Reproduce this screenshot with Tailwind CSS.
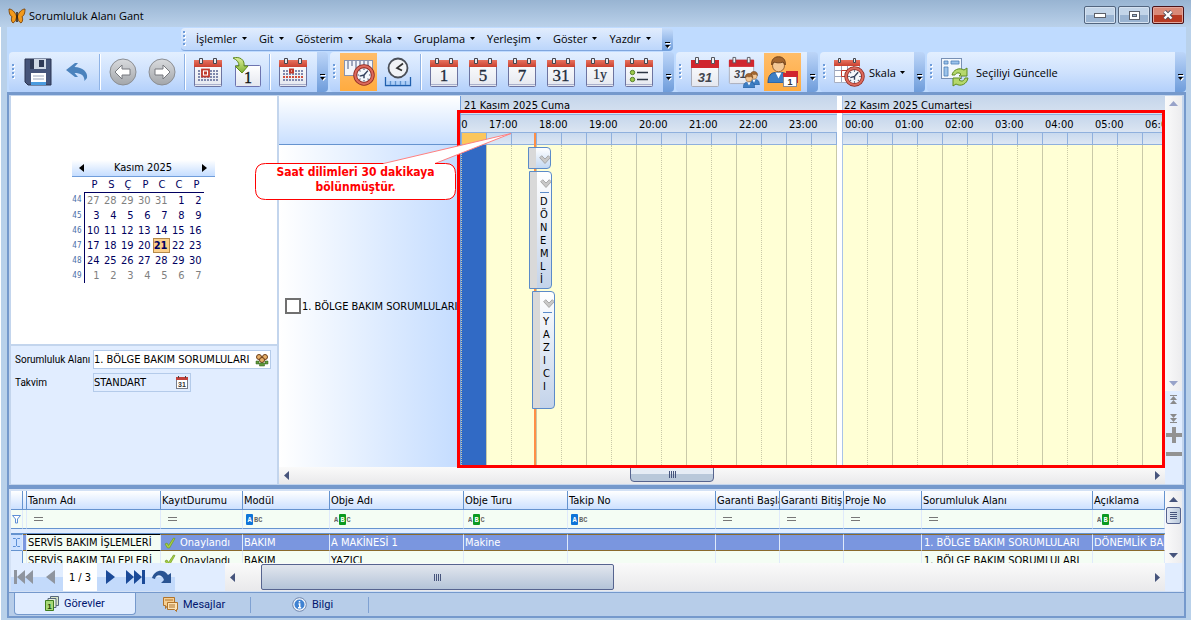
<!DOCTYPE html>
<html lang="tr">
<head>
  <meta charset="UTF-8" />
  <meta name="viewport" content="width=device-width, initial-scale=1.0"/>
  <title>Sorumluluk Alanı Gant</title>
  <script src="https://cdn.jsdelivr.net/npm/@tailwindcss/browser@4"></script>
</head>
<body class="h-screen overflow-hidden flex flex-col bg-[#b9d1ea] font-['DejaVu_Sans_Condensed','DejaVu_Sans',sans-serif] text-[11px] leading-[15px] text-black">

  <!-- Shared icon parts -->
  <svg class="absolute" width="0" height="0">
    <defs>
      <linearGradient id="red" x1="0" y1="0" x2="0" y2="1"><stop offset="0" stop-color="#e8735f"/><stop offset="1" stop-color="#c9402f"/></linearGradient>
      <linearGradient id="paper" x1="0" y1="0" x2="0" y2="1"><stop offset="0" stop-color="#ffffff"/><stop offset="1" stop-color="#e4e7ef"/></linearGradient>
      <linearGradient id="disc" x1="0" y1="0" x2="0" y2="1"><stop offset="0" stop-color="#d9dbde"/><stop offset="1" stop-color="#a3a6aa"/></linearGradient>
      <linearGradient id="green" x1="0" y1="0" x2="0" y2="1"><stop offset="0" stop-color="#dff09a"/><stop offset="1" stop-color="#7db031"/></linearGradient>
    </defs>
    <symbol id="cal" viewBox="0 0 30 32">
      <rect x="1.500" y="4.500" width="27" height="26" rx="1" fill="url(#paper)" stroke="#6d74a0"/>
      <path d="M2 28.500h26" stroke="#aab0cc"/>
      <path d="M1 4h28v7H1z" fill="url(#red)"/>
      <path d="M6.500 2.500h3v5h-3zM20.500 2.500h3v5h-3z" fill="#e9e9ee" stroke="#44474f"/>
    </symbol>
    <symbol id="cal31" viewBox="0 0 30 32">
      <rect x="1.500" y="4.500" width="27" height="26" rx="1" fill="url(#paper)" stroke="#a9acb8"/>
      <path d="M1 4h28v8H1z" fill="#d0262d"/>
      <path d="M5.500 1.500h3v6h-3zM21.500 1.500h3v6h-3z" fill="#f1f1f4" stroke="#55575f"/>
    </symbol>
    <symbol id="clock" viewBox="0 0 20 20">
      <circle cx="10" cy="10" r="8" fill="#f4f7fb" stroke="#8e2a22" stroke-width="3.500"/>
      <circle cx="10" cy="10" r="8" fill="none" stroke="#dc6a5c" stroke-width="2"/>
      <path d="M10 4v1.500M10 14.500V16M4 10h1.500M14.500 10H16M5.800 5.800l1 1M14.200 14.200l-1-1M5.800 14.200l1-1" stroke="#4d5a73"/>
      <path d="M6 11l4-1 3.500-4M10 10v3" stroke="#33405c" stroke-width="1.300" fill="none"/>
    </symbol>
    <symbol id="down" viewBox="0 0 5 3"><path d="M0 0h5L2.500 3z" fill="#000"/></symbol>
    <symbol id="more" viewBox="0 0 7 8"><path d="M2 2h5v1H2zM2 5h5L4.500 8z" fill="#fff"/><path d="M1 1h5v1H1zM1 4h5L3.500 7z" fill="#000"/></symbol>
    <symbol id="grip" viewBox="0 0 4 16"><path d="M1 1h2v2H1zM1 5h2v2H1zM1 9h2v2H1zM1 13h2v2H1z" fill="#fff"/><path d="M0 0h2v2H0zM0 4h2v2H0zM0 8h2v2H0zM0 12h2v2H0z" fill="#6f9ddb"/></symbol>
    <symbol id="tri" viewBox="0 0 5 9"><path d="M0 0l5 4.500L0 9z" fill="#46547c"/></symbol>
    <symbol id="eq" viewBox="0 0 9 5"><path d="M0 .5h9M0 3.500h9" stroke="#777"/></symbol>
    <symbol id="chev" viewBox="0 0 12 10"><path d="M.7 2.700l2-2L6 4l3.300-3.300 2 2L6 8.500z" fill="#c8c8c8" stroke="#9a9a9a" stroke-width=".8"/></symbol>
    <symbol id="check" viewBox="0 0 12 12"><path d="M1 7l2-1 1.500 2.500L9.500 1l1.500.5L5.500 11h-2z" fill="#a8cf45" stroke="#6f9b22" stroke-width=".7"/></symbol>
    <symbol id="man" viewBox="0 0 14 18">
      <path d="M0 18c0-5 2-7 5-7h4c3 0 5 2 5 7z" fill="#3f7fc4" stroke="#1f4f8c" stroke-width=".6"/>
      <path d="M5 11l2 4 2-4z" fill="#fff"/>
      <circle cx="7" cy="6.500" r="4" fill="#f3c795" stroke="#8c5a2c" stroke-width=".6"/>
      <path d="M2.500 6C2 2 4.500.5 7 .5S12 2 11.500 6L10 4C8 5 5 4.500 4 4z" fill="#a4662e" stroke="#6b3d17" stroke-width=".6"/>
    </symbol>
  </svg>

  <!-- Title bar -->
  <header class="h-[27px] shrink-0 flex items-center pl-2 pr-[7px] bg-gradient-to-b from-[#98b4d2] to-[#bad1ea]">
    <svg class="w-[18px] h-[18px] mt-1" viewBox="0 0 18 18">
      <path d="M8.500 9C7 5 4 2 1 2c0 4 1 7 3 7.500-1 2-1 5 1 6.500 2-1 3-3 3.500-6zM9.500 9C11 5 14 2 17 2c0 4-1 7-3 7.500 1 2 1 5-1 6.500-2-1-3-3-3.500-6z" fill="#f29a1c" stroke="#7a4309" stroke-width=".9"/>
      <path d="M9 5v10" stroke="#2b1a08" stroke-width="1.500"/>
    </svg>
    <h1 class="ml-[3px] mt-1 flex-1 font-['Open_Sans','Noto_Sans',sans-serif] text-[11px] leading-[16px]">Sorumluluk Alanı Gant</h1>
    <div class="flex gap-[2px] mt-[3px]">
      <button aria-label="Simge durumuna küçült" class="w-8 h-[18px] rounded-xs border border-[#52657f] shadow-[inset_0_0_0_1px_#d5e2f1] bg-gradient-to-b from-[#c3d5e9] from-50% to-[#9ab4d2] to-50% flex items-center justify-center">
        <svg width="12" height="6"><rect x=".5" y="1.500" width="11" height="4" fill="#fff" stroke="#5b5f68"/></svg>
      </button>
      <button aria-label="Ekranı kapla" class="w-8 h-[18px] rounded-xs border border-[#52657f] shadow-[inset_0_0_0_1px_#d5e2f1] bg-gradient-to-b from-[#c3d5e9] from-50% to-[#9ab4d2] to-50% flex items-center justify-center">
        <svg width="11" height="9"><rect x=".5" y=".5" width="10" height="8" fill="#fff" stroke="#5b5f68"/><rect x="3.500" y="3.500" width="4" height="2" fill="#9ab4d2" stroke="#5b5f68"/></svg>
      </button>
      <button aria-label="Kapat" class="w-8 h-[18px] rounded-xs border border-[#4a1218] shadow-[inset_0_0_0_1px_#e3a69c] bg-gradient-to-b from-[#d98977] from-50% to-[#b83a22] to-50% flex items-center justify-center">
        <svg width="12" height="10" viewBox="0 0 12 10"><path d="M2.500 1.500l7 7M9.500 1.500l-7 7" stroke="#4b4f5c" stroke-width="4"/><path d="M2.500 1.500l7 7M9.500 1.500l-7 7" stroke="#fff" stroke-width="2.400"/></svg>
      </button>
    </div>
  </header>

  <div class="flex-1 min-h-0 flex flex-col border-l border-white pl-[6px] pr-[5px] pb-[2px]">

    <!-- Menu -->
    <nav class="h-[25px] shrink-0 flex items-start pt-px pl-[174px] bg-[#bfdbff] font-['Open_Sans','Noto_Sans',sans-serif] text-[11px]">
      <div class="h-[23px] w-[481px] pb-px flex items-center bg-gradient-to-b from-[#e2edfd] to-[#bcd6fb] border-b border-[#7fa6de] rounded-l-sm">
        <svg class="w-1 h-4 ml-[2px] mr-[3px]"><use href="#grip"/></svg>
        <button class="px-[6px] flex items-center gap-[5px]">İşlemler<svg class="w-[5px] h-[3px]"><use href="#down"/></svg></button>
        <button class="px-[6px] flex items-center gap-[5px]">Git<svg class="w-[5px] h-[3px]"><use href="#down"/></svg></button>
        <button class="px-[6px] flex items-center gap-[5px]">Gösterim<svg class="w-[5px] h-[3px]"><use href="#down"/></svg></button>
        <button class="px-[6px] flex items-center gap-[5px]">Skala<svg class="w-[5px] h-[3px]"><use href="#down"/></svg></button>
        <button class="px-[6px] flex items-center gap-[5px]">Gruplama<svg class="w-[5px] h-[3px]"><use href="#down"/></svg></button>
        <button class="px-[6px] flex items-center gap-[5px]">Yerleşim<svg class="w-[5px] h-[3px]"><use href="#down"/></svg></button>
        <button class="px-[6px] flex items-center gap-[5px]">Göster<svg class="w-[5px] h-[3px]"><use href="#down"/></svg></button>
        <button class="px-[6px] flex items-center gap-[5px]">Yazdır<svg class="w-[5px] h-[3px]"><use href="#down"/></svg></button>
      </div>
      <button aria-label="Diğer" class="h-[23px] w-[11px] rounded-r-sm bg-gradient-to-b from-[#c6dcfa] to-[#6f9ddb] flex items-end justify-center pb-[2px]"><svg class="w-[7px] h-2"><use href="#more"/></svg></button>
    </nav>

    <!-- Toolbars -->
    <div class="h-10 shrink-0 flex gap-[2px] pl-[2px] bg-[#bfdbff] font-['Open_Sans','Noto_Sans',sans-serif] text-[11px]">
      <div class="flex">
        <div class="flex items-center pr-[5px] rounded-l-sm bg-gradient-to-b from-[#e3efff] via-[#cfe2fd] to-[#b3d0fb]">
          <svg class="w-1 h-4 ml-[3px] mr-[2px]"><use href="#grip"/></svg>
          <button aria-label="Kaydet" class="w-[39px] h-[38px] flex items-center justify-center">
            <svg width="28" height="28" viewBox="0 0 28 28">
              <path d="M1 1h26v26H4l-3-3z" fill="#46557a" stroke="#2a3450"/>
              <path d="M6 1h16v10H6z" fill="#cfd8e6"/><path d="M15 2h5v7h-5z" fill="#2f3a57"/><path d="M6 1h4v10H6z" fill="#2f3a57"/>
              <path d="M7 15h15v12H7z" fill="#fff"/><path d="M7 24h15v3H7z" fill="#4b9ce0"/><path d="M9 18h11M9 21h11" stroke="#9aa6bd"/>
            </svg>
          </button>
          <button aria-label="Geri al" class="w-[39px] h-[38px] flex items-center justify-center">
            <svg width="24" height="20" viewBox="0 0 24 20"><path d="M1 8L10 1h3L9.500 5c8 0 13.500 5 12.500 11l-2.500 3c0-6-4-8-10-8l3.500 4h-3z" fill="#4a82bd"/></svg>
          </button>
          <span class="w-[7px] h-9 flex justify-center"><i class="w-[2px] bg-[#8fb3e6] border-r border-white"></i></span>
          <button aria-label="Önceki" class="w-[39px] h-[38px] flex items-center justify-center">
            <svg width="28" height="28" viewBox="0 0 28 28"><circle cx="14" cy="14" r="13" fill="url(#disc)" stroke="#8b8e93"/><path d="M6 14l7-7v4h8v6h-8v4z" fill="#fff" stroke="#77797e"/></svg>
          </button>
          <button aria-label="Sonraki" class="w-[39px] h-[38px] flex items-center justify-center">
            <svg width="28" height="28" viewBox="0 0 28 28"><circle cx="14" cy="14" r="13" fill="url(#disc)" stroke="#8b8e93"/><path d="M22 14l-7-7v4H7v6h8v4z" fill="#fff" stroke="#77797e"/></svg>
          </button>
          <span class="w-[7px] h-9 flex justify-center"><i class="w-[2px] bg-[#8fb3e6] border-r border-white"></i></span>
          <button aria-label="Bugün" class="w-[39px] h-[38px] flex items-center justify-center">
            <svg width="30" height="32" viewBox="0 0 30 32"><use href="#cal"/><path d="M5 15h20M5 18h20M5 21h20M5 24h20" stroke="#8089ad" stroke-width="2" stroke-dasharray="2 1"/><rect x="9" y="13.500" width="7" height="7" fill="#fff" stroke="#c0392b" stroke-width="1.800"/><path d="M11 15.500h3v3h-3z" fill="#c0392b"/></svg>
          </button>
          <button aria-label="Tarihe git" class="w-[39px] h-[38px] flex items-center justify-center">
            <svg width="30" height="32" viewBox="0 0 30 32"><rect x="3.500" y="9.500" width="25" height="21" rx="1" fill="url(#paper)" stroke="#6d74b0"/><text x="16" y="27" text-anchor="middle" font-family="Liberation Serif, serif" font-size="16" fill="#111" stroke="#111" stroke-width=".3">1</text><path d="M1 2c7-2 12 2 11 8h4l-6 7-7-7h4c0-4-2-6-6-8z" fill="url(#green)" stroke="#5f8a1c"/></svg>
          </button>
          <span class="w-[7px] h-9 flex justify-center"><i class="w-[2px] bg-[#8fb3e6] border-r border-white"></i></span>
          <button aria-label="Takvim" class="w-[39px] h-[38px] flex items-center justify-center">
            <svg width="30" height="32" viewBox="0 0 30 32"><use href="#cal"/><path d="M5 15h20M5 24h20" stroke="#8089ad" stroke-width="2" stroke-dasharray="2 1"/><path d="M5 18h20" stroke="#8089ad" stroke-width="2" stroke-dasharray="2 1"/><path d="M5 21h20" stroke="#d0503f" stroke-width="2" stroke-dasharray="2 1"/><path d="M11 12.500h5v5h-5z" fill="#c0392b"/><path d="M13 14.500h1v1h-1z" fill="#fff"/></svg>
          </button>
        </div>
        <button aria-label="Diğer" class="w-[11px] rounded-r-sm bg-gradient-to-b from-[#bcd5f8] to-[#6f9ddb] flex items-end justify-center pb-[11px]"><svg class="w-[7px] h-2"><use href="#more"/></svg></button>
      </div>

      <div class="flex">
        <div class="flex items-center pr-[5px] rounded-l-sm bg-gradient-to-b from-[#e3efff] via-[#cfe2fd] to-[#b3d0fb]">
          <svg class="w-1 h-4 ml-[3px] mr-[2px]"><use href="#grip"/></svg>
          <button aria-label="Zaman cetveli" class="w-[37px] mx-px h-[38px] flex items-center justify-center bg-gradient-to-b from-[#ffbd69] to-[#ffab3f]">
            <svg width="32" height="32" viewBox="0 0 32 32"><rect x="1.500" y="4.500" width="28" height="15" fill="#f3f5fa" stroke="#8a93ad"/><path d="M5 5v8M9 5v5M13 5v8M17 5v5M21 5v8M25 5v5" stroke="#4d5a80"/><use href="#clock" x="10" y="8" width="22" height="22"/></svg>
          </button>
          <button aria-label="Saat" class="w-[39px] h-[38px] flex items-center justify-center">
            <svg width="28" height="32" viewBox="0 0 28 32"><circle cx="14" cy="12" r="9.500" fill="#f1f3f6" stroke="#4a4f58" stroke-width="1.800"/><path d="M19 7.500l-6 4.500 5 2.500" fill="none" stroke="#333" stroke-width="1.700"/><path d="M1.500 21v8.500h25V21M6.500 25v4M11.500 25v4M16.500 25v4M21.500 25v4" fill="none" stroke="#1f5fae" stroke-width="1.300"/><path d="M2 25h24v4H2z" fill="#9ec6f2" opacity=".5"/></svg>
          </button>
          <span class="w-[7px] h-9 flex justify-center"><i class="w-[2px] bg-[#8fb3e6] border-r border-white"></i></span>
          <button aria-label="1 gün" class="w-[39px] h-[38px] flex items-center justify-center"><svg width="30" height="32" viewBox="0 0 30 32"><use href="#cal"/><text x="15" y="25" text-anchor="middle" font-family="Liberation Serif, serif" font-size="17" fill="#222c3c" stroke="#222c3c" stroke-width=".3">1</text></svg></button>
          <button aria-label="5 gün" class="w-[39px] h-[38px] flex items-center justify-center"><svg width="30" height="32" viewBox="0 0 30 32"><use href="#cal"/><text x="15" y="25" text-anchor="middle" font-family="Liberation Serif, serif" font-size="17" fill="#222c3c" stroke="#222c3c" stroke-width=".3">5</text></svg></button>
          <button aria-label="7 gün" class="w-[39px] h-[38px] flex items-center justify-center"><svg width="30" height="32" viewBox="0 0 30 32"><use href="#cal"/><text x="15" y="25" text-anchor="middle" font-family="Liberation Serif, serif" font-size="17" fill="#222c3c" stroke="#222c3c" stroke-width=".3">7</text></svg></button>
          <button aria-label="31 gün" class="w-[39px] h-[38px] flex items-center justify-center"><svg width="30" height="32" viewBox="0 0 30 32"><use href="#cal"/><text x="15" y="25" text-anchor="middle" font-family="Liberation Serif, serif" font-size="17" fill="#222c3c" stroke="#222c3c" stroke-width=".3">31</text></svg></button>
          <button aria-label="1 yıl" class="w-[39px] h-[38px] flex items-center justify-center"><svg width="30" height="32" viewBox="0 0 30 32"><use href="#cal"/><text x="15" y="23" text-anchor="middle" font-family="Liberation Serif, serif" font-size="14" fill="#222c3c" stroke="#222c3c" stroke-width=".2">1y</text></svg></button>
          <button aria-label="Liste" class="w-[39px] h-[38px] flex items-center justify-center"><svg width="30" height="32" viewBox="0 0 30 32"><use href="#cal"/><path d="M13 16.500h11M13 23.500h11" stroke="#2b3442" stroke-width="1.300"/><circle cx="8.500" cy="16.500" r="2.200" fill="#9cc94a" stroke="#55802a"/><circle cx="8.500" cy="23.500" r="2.200" fill="#9cc94a" stroke="#55802a"/></svg></button>
        </div>
        <button aria-label="Diğer" class="w-[11px] rounded-r-sm bg-gradient-to-b from-[#bcd5f8] to-[#6f9ddb] flex items-end justify-center pb-[11px]"><svg class="w-[7px] h-2"><use href="#more"/></svg></button>
      </div>

      <div class="flex">
        <div class="flex items-center pr-[5px] rounded-l-sm bg-gradient-to-b from-[#e3efff] via-[#cfe2fd] to-[#b3d0fb]">
          <svg class="w-1 h-4 ml-[3px] mr-[2px]"><use href="#grip"/></svg>
          <button aria-label="Ay" class="w-[39px] h-[38px] flex items-center justify-center"><svg width="30" height="32" viewBox="0 0 30 32"><use href="#cal31"/><text x="15" y="26" text-anchor="middle" font-family="Liberation Sans, sans-serif" font-weight="bold" font-style="italic" font-size="13" fill="#43464e">31</text></svg></button>
          <button aria-label="Ekip takvimi" class="w-[39px] h-[38px] flex items-center justify-center"><svg width="32" height="34" viewBox="0 0 32 34"><use href="#cal31" x="0" y="1" width="27" height="29"/><text x="12" y="23" text-anchor="middle" font-family="Liberation Sans, sans-serif" font-weight="bold" font-style="italic" font-size="11" fill="#43464e">31</text><use href="#man" x="20" y="16" width="12" height="14"/><use href="#man" x="15" y="18" width="12" height="15"/></svg></button>
          <button aria-label="Kişi takvimi" class="w-[37px] mx-px h-[38px] flex items-center justify-center bg-gradient-to-b from-[#ffbd69] to-[#ffab3f]"><svg width="32" height="34" viewBox="0 0 32 34"><use href="#man" x="0" y="1" width="23" height="27"/><path d="M19 16h12v12H19z" fill="#d0262d"/><rect x="16.500" y="18.500" width="13" height="13" fill="#fff" stroke="#888c98"/><path d="M16 18h14v4H16z" fill="#d0262d"/><text x="23" y="30" text-anchor="middle" font-family="Liberation Sans, sans-serif" font-weight="bold" font-size="9" fill="#333">1</text></svg></button>
        </div>
        <button aria-label="Diğer" class="w-[11px] rounded-r-sm bg-gradient-to-b from-[#bcd5f8] to-[#6f9ddb] flex items-end justify-center pb-[11px]"><svg class="w-[7px] h-2"><use href="#more"/></svg></button>
      </div>

      <div class="flex">
        <div class="w-[94px] flex items-center rounded-l-sm bg-gradient-to-b from-[#e3efff] via-[#cfe2fd] to-[#b3d0fb]">
          <svg class="w-1 h-4 ml-[3px] mr-[2px]"><use href="#grip"/></svg>
          <button class="flex items-center gap-1 pl-1 h-[38px]">
            <svg width="32" height="32" viewBox="0 0 32 32"><path d="M1.500 5.500h25v21h-25z" fill="#fff" stroke="#a9b0c2"/><path d="M2 14.500h24M2 20.500h24M8.500 10v16M14.500 10v16M20.500 10v16" stroke="#9aa3bb"/><path d="M1 4h26v6H1z" fill="url(#red)"/><path d="M5.500 2.500h2v4h-2zM20.500 2.500h2v4h-2z" fill="#eee" stroke="#44474f"/><path d="M8.500 14.500h6v6h-6z" fill="none" stroke="#c0392b"/><use href="#clock" x="11" y="10" width="21" height="21"/></svg>
            Skala<svg class="w-[5px] h-[3px]"><use href="#down"/></svg>
          </button>
        </div>
        <button aria-label="Diğer" class="w-[11px] rounded-r-sm bg-gradient-to-b from-[#bcd5f8] to-[#6f9ddb] flex items-end justify-center pb-[11px]"><svg class="w-[7px] h-2"><use href="#more"/></svg></button>
      </div>

      <div class="flex flex-1">
        <div class="flex-1 flex items-center rounded-l-sm bg-gradient-to-b from-[#e3efff] via-[#cfe2fd] to-[#b3d0fb]">
          <svg class="w-1 h-4 ml-[3px] mr-[2px]"><use href="#grip"/></svg>
          <button class="flex items-center gap-[6px] pl-1 h-[38px]">
            <svg width="30" height="30" viewBox="0 0 30 30"><rect x="1.500" y="1.500" width="20" height="20" fill="#f2f7fc" stroke="#7890b4"/><path d="M4 4h4v3H4zM11 4h8v3h-8zM4 10h4v9H4z" fill="#9cc3ea" stroke="#4d7fb8" stroke-width=".8"/>
              <path d="M12 18c1-5 7-8 12-5l3-2v8h-8l2-2c-3-2-5-1-6 1z" fill="#b5d86c" stroke="#5e8b22"/><path d="M28 21c-1 6-7 9-12 6l-3 2v-8h8l-2 2c3 2 5 1 6-2z" fill="#b5d86c" stroke="#5e8b22"/></svg>
            Seçiliyi Güncelle
          </button>
        </div>
        <button aria-label="Diğer" class="w-[11px] rounded-r-sm bg-gradient-to-b from-[#bcd5f8] to-[#6f9ddb] flex items-end justify-center pb-[11px]"><svg class="w-[7px] h-2"><use href="#more"/></svg></button>
      </div>
    </div>

    <main class="flex-1 min-h-0 flex flex-col border-2 border-t-[3px] border-[#7599cc] bg-[#7599cc]">
      <div class="flex-1 min-h-0 flex gap-[2px] px-[2px] py-px bg-[#c3d5ed]">

        <!-- Month and filter panel -->
        <aside class="w-[266px] shrink-0 flex flex-col gap-[2px]">
          <section class="h-[248px] pt-[2px] pr-[2px] bg-white flex flex-col items-center justify-center">
            <div class="w-[143px] h-[17px] flex items-center justify-between px-[7px] bg-gradient-to-b from-white to-[#c5ddff] border-b border-[#6f9ddb]">
              <button aria-label="Önceki ay"><svg width="5" height="8"><path d="M5 0v8L0 4z"/></svg></button>
              <span>Kasım 2025</span>
              <button aria-label="Sonraki ay"><svg width="5" height="8"><path d="M0 0v8l5-4z"/></svg></button>
            </div>
            <table class="w-[132px] mr-[11px] table-fixed border-separate border-spacing-0 text-[#000060] text-right [&_td]:p-0 [&_td]:pr-[2px] [&_td]:h-[15px]">
              <thead>
                <tr id="weekdays" class="h-[15px]"><th class="w-[13px]"></th></tr>
              </thead>
              <tbody id="month"></tbody>
            </table>
          </section>
          <section class="flex-1 bg-[#e1edff] pt-1 pl-[3px] flex flex-col gap-1">
            <div class="flex items-center">
              <label for="area" class="w-[79px] pl-px whitespace-nowrap font-['Roboto','Noto_Sans',sans-serif] text-[10px]">Sorumluluk Alanı</label>
              <div class="w-[178px] h-[19px] flex items-center bg-white border border-[#b4cbea]">
                <input id="area" value="1. BÖLGE BAKIM SORUMLULARI" class="flex-1 min-w-0 outline-none bg-transparent">
                <button aria-label="Sorumluluk alanı seç" class="px-px"><svg width="14" height="14" viewBox="0 0 14 14"><circle cx="4" cy="4" r="2.500" fill="#e7b06a" stroke="#6b3d17"/><circle cx="10" cy="4" r="2.500" fill="#e7b06a" stroke="#6b3d17"/><circle cx="7" cy="7" r="2.500" fill="#e7b06a" stroke="#6b3d17"/><path d="M1 8h3v3H1zM10 8h3v3h-3zM4.500 10h5v3h-5z" fill="#5f9b3c" stroke="#2f5a18" stroke-width=".5"/></svg></button>
              </div>
            </div>
            <div class="flex items-center">
              <label for="calendar" class="w-[79px] pl-px font-['Roboto','Noto_Sans',sans-serif] text-[10px]">Takvim</label>
              <div class="w-[98px] h-[19px] flex items-center border border-[#b4cbea]">
                <input id="calendar" value="STANDART" class="flex-1 min-w-0 outline-none bg-transparent">
                <button aria-label="Takvim seç" class="px-[2px]"><svg width="12" height="13" viewBox="0 0 12 13"><rect x=".5" y="1.500" width="11" height="11" fill="#fff" stroke="#777c8a"/><path d="M0 1h12v3H0z" fill="#c2413a"/><path d="M2.500 0v2M9.500 0v2" stroke="#444"/><text x="6" y="11" text-anchor="middle" font-family="Liberation Sans, sans-serif" font-weight="bold" font-size="7" fill="#333">31</text></svg></button>
              </div>
            </div>
          </section>
        </aside>

        <!-- Gantt -->
        <section class="relative flex-1 min-w-0 flex flex-col bg-[#e1edff]">
          <div class="relative flex-1 min-h-0 flex">
            <div class="w-[182px] shrink-0 flex flex-col border-r border-[#6f9ddb]">
              <div class="h-[49px] border-b border-[#6593cf] bg-gradient-to-b from-white to-[#c9dfff]"></div>
              <div class="flex-1 flex items-center pl-[6px] bg-gradient-to-r from-white to-[#c4dcff]">
                <label class="flex items-center gap-px whitespace-nowrap">
                  <input type="checkbox" class="appearance-none w-4 h-4 bg-white border-2 border-[#707070]">1. BÖLGE BAKIM SORUMLULARI
                </label>
              </div>
            </div>

            <div class="relative flex-1 min-w-0 flex overflow-hidden bg-white">
              <div class="shrink-0 w-[376px] flex flex-col">
                <div class="h-[18px] pl-[3px] pt-[2px] bg-gradient-to-b from-[#c5d6eb] to-[#d6e1f0]">21 Kasım 2025 Cuma</div>
                <div id="day1" class="flex-1 flex justify-end overflow-hidden"></div>
              </div>
              <div class="w-[5px] shrink-0"></div>
              <div class="flex-1 min-w-0 flex flex-col border-l border-[#a9c3e8]">
                <div class="h-[18px] pl-px pt-[2px] bg-gradient-to-b from-[#c5d6eb] to-[#d6e1f0]">22 Kasım 2025 Cumartesi</div>
                <div id="day2" class="flex-1 flex overflow-hidden"></div>
              </div>

              <!-- Current time and tasks -->
              <div class="absolute left-[73px] top-[37px] bottom-0 w-[2px] bg-[#ff8f45]"></div>
              <div class="absolute left-[67px] top-[51px] w-[23px] h-[22px] flex rounded-r-sm border border-[#5b8bc9] bg-gradient-to-b from-white to-[#c3d8f2] overflow-hidden">
                <i class="w-[7px] shrink-0 bg-[#d9d9d9]"></i>
                <svg class="w-3 h-[10px] shrink-0 mt-[7px] ml-[3px]"><use href="#chev"/></svg>
              </div>
              <div class="absolute left-[68px] top-[75px] w-[23px] h-[118px] flex rounded-r-sm border border-[#5b8bc9] bg-gradient-to-b from-white to-[#c3d3ea] overflow-hidden">
                <i class="w-[7px] shrink-0 bg-[#d9d9d9]"></i>
                <div class="w-4 shrink-0 pl-[3px]">
                  <svg class="w-3 h-[10px] mt-[7px]"><use href="#chev"/></svg>
                  <div class="w-[9px] pr-[2px] mt-[3px] pt-[2px] border-t border-[#5b8bc9] leading-[13px] break-all">DÖNEMLİK</div>
                </div>
              </div>
              <div class="absolute left-[71px] top-[195px] w-[23px] h-[118px] flex rounded-r-sm border border-[#5b8bc9] bg-gradient-to-b from-white to-[#c3d3ea] overflow-hidden">
                <i class="w-[7px] shrink-0 bg-[#d9d9d9]"></i>
                <div class="w-4 shrink-0 pl-[3px]">
                  <svg class="w-3 h-[10px] mt-[7px]"><use href="#chev"/></svg>
                  <div class="w-[9px] pr-[2px] mt-[3px] pt-[2px] border-t border-[#5b8bc9] leading-[13px] break-all">YAZICI</div>
                </div>
              </div>
            </div>

            <div class="w-[17px] shrink-0 flex flex-col items-center gap-1">
              <div class="w-full flex-1 flex flex-col items-center justify-between py-[5px] bg-gradient-to-r from-[#fafafa] to-[#ececee]">
                <button aria-label="Yukarı"><svg class="block" width="9" height="5"><path d="M0 5h9L4.500 0z" fill="#98a3c9"/></svg></button>
                <button aria-label="Aşağı"><svg class="block" width="9" height="5"><path d="M0 0h9L4.500 5z" fill="#98a3c9"/></svg></button>
              </div>
              <button aria-label="Satırları daralt"><svg class="block" width="7" height="10"><path d="M0 .5h7" stroke="#8a8a8a"/><path d="M0 5h7L3.500 1zM0 9h7L3.500 5z" fill="#8a8a8a"/></svg></button>
              <button aria-label="Satırları genişlet" class="mt-1"><svg class="block" width="7" height="10"><path d="M0 9.500h7" stroke="#8a8a8a"/><path d="M0 1h7L3.500 5zM0 5h7L3.500 9z" fill="#8a8a8a"/></svg></button>
              <button aria-label="Yakınlaştır"><svg class="block" width="16" height="16"><path d="M6 0h4v6h6v4h-6v6H6v-6H0V6h6z" fill="#929292"/></svg></button>
              <button aria-label="Uzaklaştır" class="mt-[5px] mb-[11px]"><svg class="block" width="16" height="4"><path d="M0 0h16v4H0z" fill="#929292"/></svg></button>
            </div>

            <div class="absolute left-[178px] right-[17px] top-[14px] -bottom-px border-3 border-[#ff0000]"></div>
          </div>

          <div class="h-[17px] shrink-0 flex mr-[17px] bg-gradient-to-b from-[#fafafa] to-[#e9e9eb]">
            <button aria-label="Sola kaydır" class="pl-[5px] w-[351px] flex items-center"><svg class="w-[5px] h-[9px] rotate-180"><use href="#tri"/></svg></button>
            <div class="w-[84px] h-[15px] rounded-b-sm border border-[#56648f] bg-gradient-to-b from-[#e6ecf5] from-50% to-[#b9c8da] to-50% flex items-center justify-center gap-px"><i class="w-px h-[7px] bg-[#46547c]"></i><i class="w-px h-[7px] bg-[#46547c]"></i><i class="w-px h-[7px] bg-[#46547c]"></i><i class="w-px h-[7px] bg-[#46547c]"></i></div>
            <button aria-label="Sağa kaydır" class="flex-1 flex items-center justify-end pr-[5px]"><svg class="w-[5px] h-[9px]"><use href="#tri"/></svg></button>
          </div>

          <!-- Callout -->
          <svg class="absolute -left-6 top-[36px]" width="260" height="70" viewBox="0 0 260 70">
            <path d="M10.500 31.500h118L256 1.500 180 31.500h10.500q10 0 10 10v16q0 10-10 10h-180q-10 0-10-10v-16q0-10 10-10z" fill="#fff"/>
            <path d="M128.500 31.500L256 1.500 180 31.500" fill="none" stroke="#ff8080"/>
            <path d="M128.500 31.500h-118q-10 0-10 10v16q0 10 10 10h180q10 0 10-10v-16q0-10-10-10H180" fill="none" stroke="#ff0000"/>
          </svg>
          <p class="absolute -left-6 top-[69px] w-[201px] text-center text-[12px] leading-[15px] font-bold text-[#ff0000]">Saat dilimleri 30 dakikaya<br>bölünmüştür.</p>
        </section>
      </div>

      <!-- Task grid -->
      <section class="mt-1 shrink-0 px-[2px] pb-px pt-[2px] bg-[#d3e1f5] flex flex-col">
        <div class="h-[72px] flex overflow-hidden">
          <table class="flex-1 w-full table-fixed self-start border-separate border-spacing-0 text-left whitespace-nowrap [&_th]:font-normal [&_th]:overflow-hidden [&_td]:overflow-hidden [&_th]:pl-px [&_th]:py-0 [&_td]:py-0 [&_td]:pl-px [&_td]:pr-0 [&_th]:pr-0">
            <colgroup>
              <col class="w-3"><col class="w-1"><col class="w-[134px]"><col class="w-[82px]"><col class="w-[87px]"><col class="w-[134px]"><col class="w-[104px]"><col class="w-[148px]"><col class="w-16"><col class="w-16"><col class="w-[78px]"><col class="w-[171px]"><col>
            </colgroup>
            <thead>
              <tr class="[&_th]:h-[19px] [&_th]:border-r [&_th]:border-b [&_th]:border-[#6593cf] [&_th]:bg-gradient-to-b [&_th]:from-white [&_th]:to-[#cde1ff]">
                <th></th><th></th><th>Tanım Adı</th><th>KayıtDurumu</th><th>Modül</th><th>Obje Adı</th><th>Obje Turu</th><th>Takip No</th><th>Garanti Başla</th><th>Garanti Bitiş</th><th>Proje No</th><th>Sorumluluk Alanı</th><th>Açıklama</th>
              </tr>
            </thead>
            <tbody>
              <tr id="filters" class="[&_td]:h-[19px] [&_td]:border-r [&_td]:border-r-[#dfeafb] [&_td]:border-b [&_td]:border-b-[#6593cf] [&_td]:bg-[#f4fdf4]"></tr>
              <tr class="[&_td]:h-[5px] [&_td]:leading-[4px] [&_td]:border-b [&_td]:border-[#6593cf] [&_td]:bg-[#e1edff]"><td colspan="13"></td></tr>
              <tr class="text-white [&_td]:h-[17px] [&_td]:border-r [&_td]:border-r-[#dfeafb] [&_td]:border-y [&_td]:border-y-[#8a6a2c] [&_td]:bg-[#7a96df]">
                <td class="bg-[#cde1ff]! border-y-[#6593cf]!"><svg width="9" height="11"><path d="M1 1.500h2.500l1 1 1-1H8M4.500 2v7M1 9.500h2.500l1-1 1 1H8" fill="none" stroke="#5c8fd6"/></svg></td><td></td>
                <td class="bg-[#f4fdf4]! text-black border-y-black!">SERVİS BAKIM İŞLEMLERİ</td>
                <td><span class="flex items-center pl-[2px] gap-1"><svg class="w-3 h-3"><use href="#check"/></svg>Onaylandı</span></td>
                <td>BAKIM</td><td>A MAKİNESİ 1</td><td>Makine</td><td></td><td></td><td></td><td></td><td class="pl-[2px]!">1. BÖLGE BAKIM SORUMLULARI</td><td>DÖNEMLİK BAKIM</td>
              </tr>
              <tr class="[&_td]:h-[18px] [&_td]:border-r [&_td]:border-[#dfeafb] [&_td]:bg-[#f4fdf4]">
                <td class="bg-[#e1edff]! border-[#6593cf]!"></td><td></td>
                <td>SERVİS BAKIM TALEPLERİ</td>
                <td><span class="flex items-center pl-[2px] gap-1"><svg class="w-3 h-3"><use href="#check"/></svg>Onaylandı</span></td>
                <td>BAKIM</td><td>YAZICI</td><td></td><td></td><td></td><td></td><td></td><td class="pl-[2px]!">1. BÖLGE BAKIM SORUMLULARI</td><td></td>
              </tr>
            </tbody>
          </table>
          <div class="w-[17px] shrink-0 flex flex-col items-center justify-between pt-[6px] pb-[5px] bg-gradient-to-r from-[#fafafa] to-[#ececee]">
            <button aria-label="Yukarı kaydır"><svg class="block" width="9" height="5"><path d="M0 5h9L4.500 0z" fill="#46547c"/></svg></button>
            <div class="w-[15px] h-[17px] mb-6 rounded-xs border border-[#56648f] bg-gradient-to-r from-[#e6ecf5] to-[#b9c8da] flex flex-col items-center justify-center gap-px"><i class="h-px w-[7px] bg-[#46547c]"></i><i class="h-px w-[7px] bg-[#46547c]"></i><i class="h-px w-[7px] bg-[#46547c]"></i><i class="h-px w-[7px] bg-[#46547c]"></i></div>
            <button aria-label="Aşağı kaydır"><svg class="block" width="9" height="5"><path d="M0 0h9L4.500 5z" fill="#46547c"/></svg></button>
          </div>
        </div>

        <div class="h-7 flex bg-[#e1edff]">
          <div class="w-[164px] mr-[50px] shrink-0 flex bg-gradient-to-b from-[#e1edff] from-50% to-[#c3dafb] to-50%">
            <button aria-label="İlk kayıt" class="w-[26px] flex items-center justify-center"><svg width="20" height="14"><path d="M0 0h3v14H0zM11 0v14L3 7zM19 0v14l-8-7z" fill="#8f959f"/></svg></button>
            <button aria-label="Önceki kayıt" class="w-[26px] flex items-center justify-center"><svg width="9" height="14"><path d="M9 0v14L0 7z" fill="#8f959f"/></svg></button>
            <span class="w-[34px] flex items-center justify-center bg-white">1 / 3</span>
            <button aria-label="Sonraki kayıt" class="w-[26px] flex items-center justify-center"><svg width="9" height="14"><path d="M0 0v14l9-7z" fill="#1b4a98"/></svg></button>
            <button aria-label="Son kayıt" class="w-[26px] flex items-center justify-center"><svg width="20" height="14"><path d="M0 0v14l8-7zM8 0v14l8-7zM16 0h3v14h-3z" fill="#1b4a98"/></svg></button>
            <button aria-label="Yenile" class="w-[26px] flex items-center justify-center"><svg width="20" height="14"><path d="M0 8C2 0 12-2 16 5l3-2v10H9l3-3C10 4 4 4 3 9z" fill="#2a5493"/></svg></button>
          </div>
          <div class="flex-1 mr-[17px] flex bg-gradient-to-b from-[#fafafa] to-[#e9e9eb]">
            <button aria-label="Sola kaydır" class="pl-[5px] w-9 flex items-center"><svg class="w-[5px] h-[9px] rotate-180"><use href="#tri"/></svg></button>
            <div class="w-[353px] h-[26px] mt-px rounded-xs border border-[#56648f] bg-gradient-to-b from-[#e2e6ee] to-[#b4c4d8] flex items-center justify-center gap-px"><i class="w-px h-[7px] bg-[#46547c]"></i><i class="w-px h-[7px] bg-[#46547c]"></i><i class="w-px h-[7px] bg-[#46547c]"></i><i class="w-px h-[7px] bg-[#46547c]"></i></div>
            <button aria-label="Sağa kaydır" class="flex-1 flex items-center justify-end pr-[5px]"><svg class="w-[5px] h-[9px]"><use href="#tri"/></svg></button>
          </div>
        </div>
      </section>

      <!-- Tabs -->
      <div class="h-6 shrink-0 flex pl-[5px] bg-[#b7cde9] border-t border-[#7599cc] font-['Roboto','Noto_Sans',sans-serif] text-[11px] text-[#00156e]">
        <button class="w-[122px] h-[22px] pl-[30px] flex items-center gap-[5px] bg-[#e1edff] border border-t-0 border-[#7599cc] rounded-b-sm">
          <svg width="14" height="15" viewBox="0 0 14 15"><path d="M5.500.5h8v9h-8z" fill="#d9e6c6" stroke="#58687c"/><path d="M3 2.500h8v9H3z" fill="#e9f1dc" stroke="#58687c"/><path d="M.5 4.500h8v10h-8z" fill="#a7d977" stroke="#3f7d1e"/><text x="4.500" y="13" text-anchor="middle" font-family="Liberation Sans, sans-serif" font-weight="bold" font-size="8" fill="#1f4a0c">1</text></svg>
          Görevler
        </button>
        <button class="w-[114px] h-[22px] pl-[27px] flex items-center gap-[5px]">
          <svg width="15" height="15" viewBox="0 0 15 15"><path d="M.5.500h11v8h-7l-2 3v-3h-2z" fill="#f6cf92" stroke="#b0732a"/><path d="M4.500 5.500h10v7h-1v2l-2-2h-7z" fill="#fbe3b6" stroke="#b0732a"/><path d="M2 3h8M6 8h6M6 10h6" stroke="#b0732a"/></svg>
          Mesajlar
        </button>
        <i class="w-px h-4 mt-1 bg-[#7fa1d2]"></i>
        <button class="w-[117px] h-[22px] pl-[41px] flex items-center gap-[5px]">
          <svg width="15" height="15" viewBox="0 0 15 15"><circle cx="7.500" cy="7.500" r="6.800" fill="#f2f6fc" stroke="#6f86ad"/><circle cx="7.500" cy="7.500" r="5" fill="#3f82d2"/><path d="M7.500 4v1.600M6.500 7h1.200v3.500M6 10.700h3.200" stroke="#fff" stroke-width="1.500" fill="none"/></svg>
          Bilgi
        </button>
        <i class="w-px h-4 mt-1 bg-[#7fa1d2]"></i>
      </div>
    </main>
  </div>

  <script>
    // Month grid
    const weekdays = document.getElementById("weekdays");
    ["P", "S", "Ç", "P", "C", "C", "P"].forEach((d) => {
      weekdays.insertAdjacentHTML("beforeend", `<th class="p-0 pr-[4px] font-normal">${d}</th>`);
    });

    const month = document.getElementById("month");
    for (let w = 0; w < 6; w++) {
      let row = `<td class="text-[8px] text-[#4a6ea8] border-r border-[#000060]">${44 + w}</td>`;
      for (let i = 0; i < 7; i++) {
        const day = new Date(2025, 9, 27 + w * 7 + i);
        let cls = w === 0 ? "border-t border-[#000060]" : "";
        if (day.getMonth() !== 10) cls += " text-[#808080]";
        else if (day.getDate() === 21) cls += " font-bold bg-[#fbd08a] shadow-[inset_0_0_0_1px_#b58a4a]";
        row += `<td class="${cls}">${day.getDate()}</td>`;
      }
      month.insertAdjacentHTML("beforeend", `<tr>${row}</tr>`);
    }

    // Hour columns, each split into two half hour slots
    function hourColumn(hour, past) {
      const label = String(hour).padStart(2, "0") + ":00";
      const slot = past ? "bg-[#fbc65c]" : "bg-gradient-to-b from-[#c8d9ee] to-[#dde7f4]";
      const body = past ? "bg-[#316ac5]" : "bg-[#ffffd5]";
      return `
        <div class="w-[50px] shrink-0 flex flex-col">
          <div class="h-[18px] pl-[2px] pt-[2px] border-t border-[#8fb0dd] bg-gradient-to-b from-[#c5d6eb] to-[#dbe5f2]">${label}</div>
          <div class="h-[13px] flex border-y border-[#8fb0dd]">
            <div class="w-[25px] border-r border-[#8fb0dd] ${slot}"></div>
            <div class="w-[25px] border-r border-[#8fb0dd] ${slot}"></div>
          </div>
          <div class="flex-1 flex ${body}">
            <div class="w-[25px] border-r border-dotted border-[#c9c9a8]"></div>
            <div class="w-[25px] border-r border-[#c9c9a8]"></div>
          </div>
        </div>`;
    }

    const day1 = document.getElementById("day1");
    for (let h = 16; h <= 23; h++) day1.insertAdjacentHTML("beforeend", hourColumn(h, h === 16));
    const day2 = document.getElementById("day2");
    for (let h = 0; h <= 6; h++) day2.insertAdjacentHTML("beforeend", hourColumn(h, false));

    // Filter row: "=" for exact match, otherwise the highlighted letter tells starts-with from contains
    const icons = {
      none: "",
      funnel: `<svg width="9" height="10"><path d="M.5 1.500h8L5.500 5v4h-2V5z" fill="#fff" stroke="#5c8fd6"/></svg>`,
      eq: `<svg class="w-[9px] h-[5px] ml-[6px]"><use href="#eq"/></svg>`,
      starts: `<svg class="ml-[2px]" width="17" height="11"><rect width="7" height="11" rx="1" fill="#0f75d8"/><g font-family="Liberation Mono, monospace" font-size="7" font-weight="bold"><text x="1.500" y="8" fill="#fff">A</text><text x="8" y="8" fill="#666">BC</text></g></svg>`,
      contains: `<svg class="ml-[3px]" width="17" height="11"><rect x="5" width="7" height="11" rx="1" fill="#0c9a20"/><g font-family="Liberation Mono, monospace" font-size="7" font-weight="bold"><text x="0" y="8" fill="#666">A</text><text x="6.500" y="8" fill="#fff">B</text><text x="12.500" y="8" fill="#666">C</text></g></svg>`,
    };
    const filters = document.getElementById("filters");
    ["funnel", "none", "eq", "eq", "starts", "contains", "contains", "starts", "eq", "eq", "eq", "eq", "contains"].forEach((k) => {
      filters.insertAdjacentHTML("beforeend", `<td>${icons[k]}</td>`);
    });
  </script>

</body>
</html>
